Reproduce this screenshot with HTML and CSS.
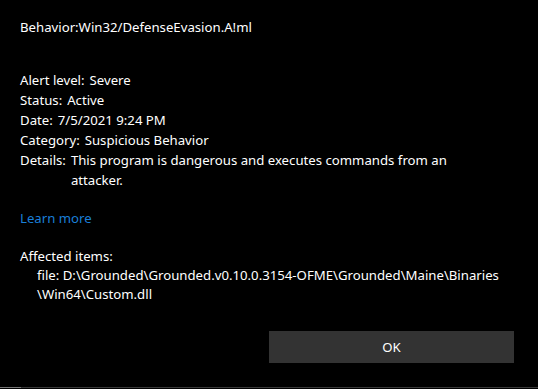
FILE: index.html
```html
<!DOCTYPE html>
<html><head><meta charset="utf-8">
<title>Behavior:Win32/DefenseEvasion.A!ml</title>
<link rel="stylesheet" href="styles.css">
</head><body>

<div class="dlg">
	<div class="title">Behavior:Win32/DefenseEvasion.A!ml</div>

	<div class="info">
		<div class="row"><span class="k">Alert level:</span><span class="v">Severe</span></div>
		<div class="row"><span class="k">Status:</span><span class="v">Active</span></div>
		<div class="row"><span class="k">Date:</span><span class="v">7/5/2021 9:24 PM</span></div>
		<div class="row"><span class="k">Category:</span><span class="v">Suspicious Behavior</span></div>
		<div class="row"><span class="k">Details:</span><span class="v">This program is dangerous and executes commands from an attacker.</span></div>
	</div>

	<a class="more" href="#">Learn more</a>

	<div class="affected">
		<div>Affected items:</div>
		<div class="item">file: D:\Grounded\Grounded.v0.10.0.3154-OFME\Grounded\Maine\Binaries</div>
		<div class="item">\Win64\Custom.dll</div>
	</div>

	<div class="btns">
		<button class="ok">OK</button>
	</div>
</div>

<div class="edge"><span></span></div>

</body></html>
```

FILE: styles.css
```css
html, body {
	margin: 0;
	background: #000;
}
body {
	width: 538px;
	height: 389px;
	overflow: hidden;
	color: #fff;
	font-family: "Segoe UI", "Noto Sans", sans-serif;
	font-size: 13.2px;
	line-height: 20px;
}
.dlg {
	padding: 17px 24px 0 20px;
}
.title {
	margin-bottom: 33px;
}
.info {
	width: 465px;
}
.row {
	display: flex;
	gap: 5px;
}
.k {
	flex: none;
}
.more {
	display: inline-block;
	margin-top: 18px;
	color: #1a7fd8;
	text-decoration: none;
}
.affected {
	margin-top: 19px;
	line-height: 19px;
}
.item {
	padding-left: 17px;
	white-space: nowrap;
}
.btns {
	display: flex;
	justify-content: flex-end;
	margin-top: 27px;
}
.ok {
	width: 245px;
	height: 32px;
	border: none;
	background: #333;
	color: #fff;
	font: inherit;
}
.edge {
	margin-top: 24px;
	height: 1px;
	background: #3a3a3a;
}
.edge span {
	display: block;
	width: 21px;
	height: 1px;
	background: #777;
}
```
